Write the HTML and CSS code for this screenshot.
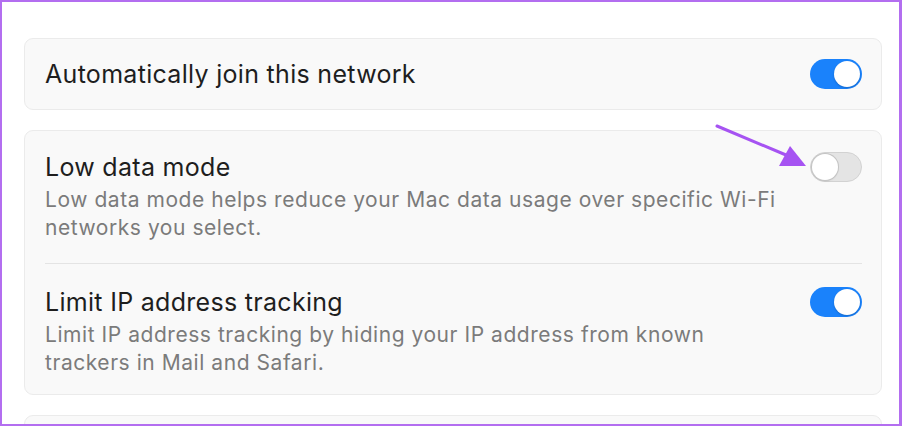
FILE: index.html
```html
<!DOCTYPE html>
<html>
<head>
<meta charset="utf-8">
<link rel="stylesheet" href="styles.css">
</head>
<body>
<div class="frame">
  <div class="card card-single">
    <div class="row row-center">
      <div class="title">Automatically join this network</div>
      <div class="toggle on"><span class="knob"></span></div>
    </div>
  </div>
  <div class="card">
    <div class="row row-first">
      <div class="text">
        <div class="title">Low data mode</div>
        <div class="desc">Low data mode helps reduce your Mac data usage over specific Wi-Fi networks you select.</div>
      </div>
      <div class="toggle off"><span class="knob"></span></div>
    </div>
    <div class="sep"></div>
    <div class="row row-last">
      <div class="text">
        <div class="title">Limit IP address tracking</div>
        <div class="desc">Limit IP address tracking by hiding your IP address from known trackers in Mail and Safari.</div>
      </div>
      <div class="toggle on"><span class="knob"></span></div>
    </div>
  </div>
  <div class="card card-tail"></div>
  <svg class="arrow" width="120" height="70" viewBox="0 0 120 70">
    <line x1="17" y1="16" x2="86" y2="45" stroke="#a653f2" stroke-width="3" stroke-linecap="round"/>
    <polygon points="106,56 90,36 79,56" fill="#a653f2"/>
  </svg>
</div>
</body>
</html>
```
FILE: styles.css
```css
html, body {
  margin: 0;
  padding: 0;
  background: #ffffff;
}
.frame {
  position: relative;
  box-sizing: border-box;
  width: 902px;
  height: 426px;
  border: 2px solid #b36ef0;
  border-right-width: 3px;
  padding: 36px 17px 0 22px;
  overflow: hidden;
  display: flex;
  flex-direction: column;
  gap: 20px;
  font-family: Inter, "Noto Sans", sans-serif;
}
.card {
  flex: none;
  background: #f9f9f9;
  border: 1px solid #ebebeb;
  border-radius: 9px;
  padding: 0 19px 0 20px;
}
.card-single {
  height: 70px;
}
.card-tail {
  height: 40px;
}
.row {
  display: flex;
  justify-content: space-between;
  align-items: flex-start;
}
.row-first {
  padding: 21px 0 21px;
}
.row-last {
  padding: 23px 0 17px;
}
.row-center {
  align-items: center;
  height: 100%;
  box-sizing: border-box;
}
.title {
  font-size: 25px;
  line-height: 30px;
  color: #1e1e1e;
  letter-spacing: 0.3px;
}
.desc {
  font-size: 21px;
  line-height: 28px;
  color: #7b7b7b;
  margin-top: 4px;
  max-width: 745px;
  letter-spacing: 0.55px;
}
.sep {
  height: 1px;
  background: #e4e4e4;
}
.toggle {
  flex: none;
  position: relative;
  width: 52px;
  height: 30px;
  border-radius: 15px;
  box-sizing: border-box;
}
.toggle.on {
  background: #1a82fb;
}
.toggle.off {
  background: #e4e4e4;
  border: 1px solid #d2d2d2;
}
.knob {
  position: absolute;
  top: 2px;
  width: 26px;
  height: 26px;
  border-radius: 50%;
  background: #ffffff;
  box-shadow: 0 1px 2px rgba(0,0,0,0.2);
}
.toggle.on .knob {
  right: 2px;
}
.toggle.off .knob {
  left: 1px;
  top: 1px;
  box-shadow: 0 0 0 1px #c4c4c4, 0 1px 2px rgba(0,0,0,0.15);
}
.arrow {
  position: absolute;
  left: 698px;
  top: 108px;
}
```
